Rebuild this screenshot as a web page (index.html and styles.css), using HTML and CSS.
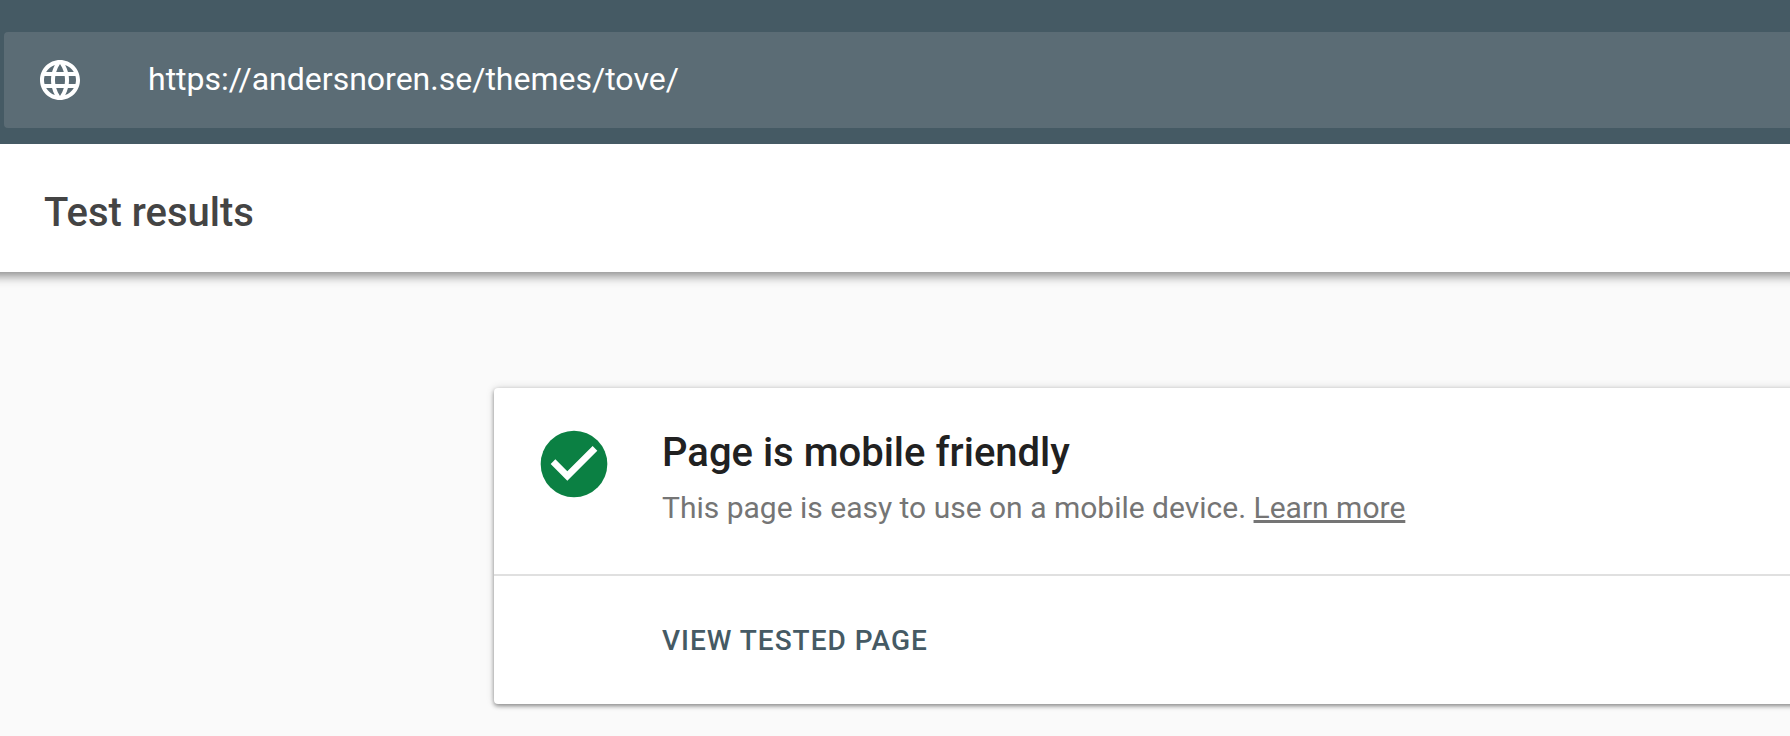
FILE: index.html
```html
<!DOCTYPE html>
<html lang="en">
<head>
  <meta charset="UTF-8">
  <meta name="viewport" content="width=device-width, initial-scale=1.0">
  <title>Mobile-Friendly Test</title>
  <link rel="stylesheet" href="styles.css">
</head>
<body>
  <header class="top-bar">
    <form class="url-box">
      <svg class="globe" viewBox="0 0 24 24" aria-hidden="true">
        <path d="M11.99 2C6.47 2 2 6.48 2 12s4.47 10 9.99 10C17.52 22 22 17.52 22 12S17.52 2 11.99 2zm6.93 6h-2.95c-.32-1.25-.78-2.45-1.38-3.56 1.84.63 3.37 1.91 4.33 3.56zM12 4.04c.83 1.2 1.48 2.53 1.91 3.96h-3.82c.43-1.43 1.08-2.76 1.91-3.96zM4.26 14C4.1 13.36 4 12.69 4 12s.1-1.36.26-2h3.38c-.08.66-.14 1.32-.14 2 0 .68.06 1.34.14 2H4.26zm.82 2h2.95c.32 1.25.78 2.45 1.38 3.56-1.84-.63-3.37-1.9-4.33-3.56zm2.95-8H5.08c.96-1.66 2.49-2.93 4.33-3.56C8.81 5.55 8.35 6.75 8.03 8zM12 19.96c-.83-1.2-1.48-2.53-1.91-3.96h3.82c-.43 1.43-1.08 2.76-1.91 3.96zM14.34 14H9.66c-.09-.66-.16-1.32-.16-2 0-.68.07-1.35.16-2h4.68c.09.65.16 1.32.16 2 0 .68-.07 1.34-.16 2zm.25 5.56c.6-1.11 1.06-2.31 1.38-3.56h2.95c-.96 1.65-2.49 2.93-4.33 3.56zM16.36 14c.08-.66.14-1.32.14-2 0-.68-.06-1.34-.14-2h3.38c.16.64.26 1.31.26 2s-.1 1.36-.26 2h-3.38z"/>
      </svg>
      <input type="text" class="url-input" aria-label="URL to test" value="https://andersnoren.se/themes/tove/" spellcheck="false">
    </form>
  </header>

  <div class="results-header">
    <h1>Test results</h1>
  </div>

  <main>
    <section class="card">
      <div class="card-body">
        <svg class="check" viewBox="0 0 24 24" aria-hidden="true">
          <circle cx="12" cy="12" r="10" fill="#0b8043"/>
          <path d="M10 17l-5-5 1.41-1.41L10 14.17l7.59-7.59L19 8l-9 9z" fill="#fff"/>
        </svg>
        <div class="card-text">
          <h2>Page is mobile friendly</h2>
          <p>This page is easy to use on a mobile device. <a href="#">Learn more</a></p>
        </div>
      </div>
      <div class="card-actions">
        <button type="button">VIEW TESTED PAGE</button>
      </div>
    </section>
  </main>
</body>
</html>
```

FILE: styles.css
```css
* {
  box-sizing: border-box;
}
body {
  font-family: Roboto, Arial, sans-serif;
  margin: 0;
  background-color: #fafafa;
  overflow-x: hidden;
}
h1, h2, p {
  margin: 0;
}
.top-bar {
  position: relative;
  z-index: 2;
  background-color: #455a64;
  padding: 32px 0 16px 4px;
}
.url-box {
  display: flex;
  align-items: center;
  gap: 64px;
  padding: 24px 0 24px 32px;
  border-radius: 4px 0 0 4px;
  background-color: #5b6c75;
}
.globe {
  width: 48px;
  height: 48px;
  flex-shrink: 0;
  fill: #fff;
}
.url-input {
  flex: 1;
  min-width: 0;
  height: 48px;
  padding: 0 0 2px;
  border: none;
  outline: none;
  background: none;
  color: #fff;
  font: 400 32px Roboto, Arial, sans-serif;
}
/* runs past both edges so the shadow stays even */
.results-header {
  position: relative;
  z-index: 1;
  margin: 0 -16px;
  padding: 40px 60px 30px;
  background-color: #fff;
  box-shadow: 0 4px 10px rgba(0, 0, 0, 0.45);
}
.results-header h1 {
  font-size: 40px;
  font-weight: 500;
  line-height: 58px;
  color: #444;
}
main {
  padding: 116px 0 32px 494px;
}
.card {
  margin-right: -16px;
  border-radius: 4px;
  background-color: #fff;
  box-shadow: 0 2px 4px rgba(0, 0, 0, 0.4), 0 0 8px rgba(0, 0, 0, 0.14);
}
.card-body {
  display: flex;
  gap: 48px;
  padding: 36px 40px 40px;
  border-bottom: 2px solid #e0e0e0;
}
.check {
  width: 80px;
  height: 80px;
  flex-shrink: 0;
}
.card-text h2 {
  font-size: 40px;
  font-weight: 500;
  line-height: 58px;
  color: #212121;
}
.card-text p {
  font-size: 30px;
  line-height: 52px;
  color: #757575;
}
.card-text a {
  color: inherit;
}
.card-actions {
  padding: 36px 40px 36px 168px;
}
.card-actions button {
  height: 56px;
  padding: 0;
  border: none;
  background: none;
  color: #455a64;
  font: 500 28px Roboto, Arial, sans-serif;
  letter-spacing: 1px;
  cursor: pointer;
}

@media (max-width: 1200px) {
  main {
    padding-left: 32px;
  }
}
```
